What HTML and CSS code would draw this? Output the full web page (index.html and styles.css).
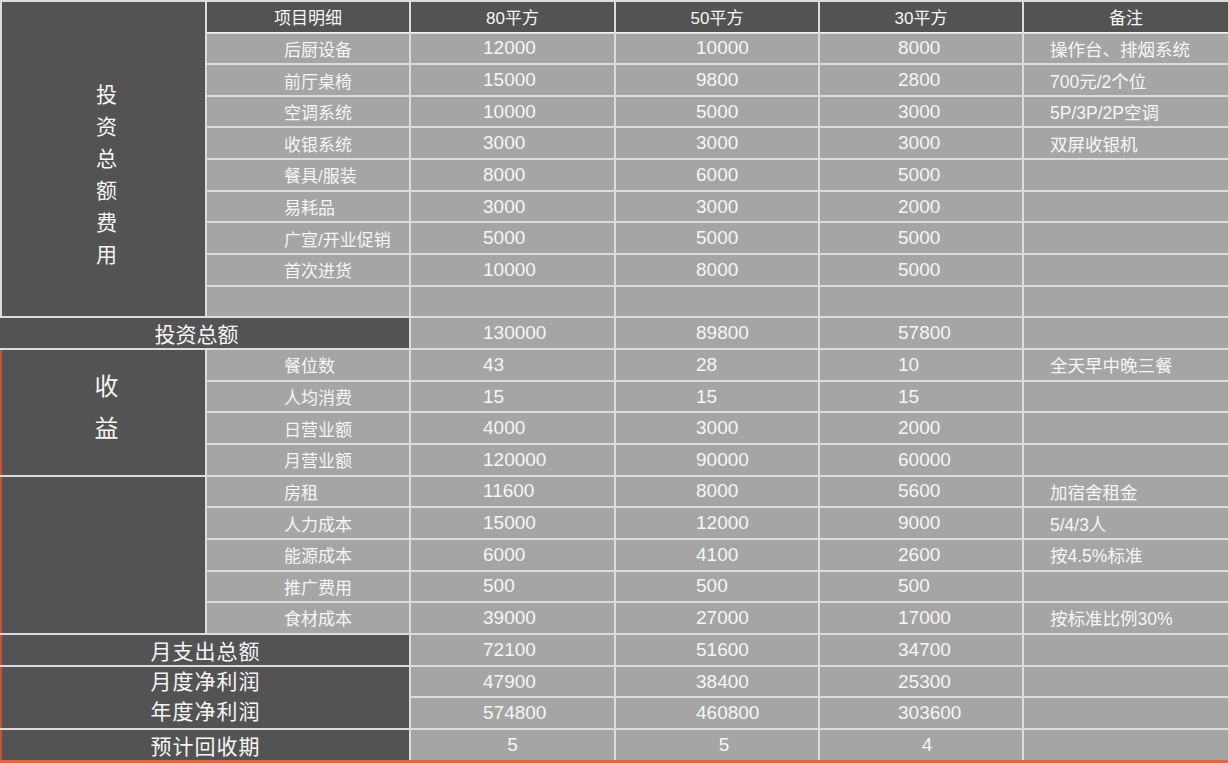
FILE: index.html
```html
<!DOCTYPE html>
<html lang="zh">
<head>
<meta charset="utf-8">
<title>投资收益表</title>
<link rel="stylesheet" href="styles.css">
</head>
<body>
<div class="sheet">
  <div class="d big tz">投<br>资<br>总<br>额<br>费<br>用</div>
  <div class="d h">项目明细</div>
  <div class="d h">80平方</div>
  <div class="d h">50平方</div>
  <div class="d h">30平方</div>
  <div class="d h">备注</div>

  <div class="l k">后厨设备</div><div class="l n a">12000</div><div class="l n b">10000</div><div class="l n c">8000</div><div class="l m">操作台、排烟系统</div>
  <div class="l k">前厅桌椅</div><div class="l n a">15000</div><div class="l n b">9800</div><div class="l n c">2800</div><div class="l m">700元/2个位</div>
  <div class="l k">空调系统</div><div class="l n a">10000</div><div class="l n b">5000</div><div class="l n c">3000</div><div class="l m">5P/3P/2P空调</div>
  <div class="l k">收银系统</div><div class="l n a">3000</div><div class="l n b">3000</div><div class="l n c">3000</div><div class="l m">双屏收银机</div>
  <div class="l k">餐具/服装</div><div class="l n a">8000</div><div class="l n b">6000</div><div class="l n c">5000</div><div class="l m"></div>
  <div class="l k">易耗品</div><div class="l n a">3000</div><div class="l n b">3000</div><div class="l n c">2000</div><div class="l m"></div>
  <div class="l k">广宣/开业促销</div><div class="l n a">5000</div><div class="l n b">5000</div><div class="l n c">5000</div><div class="l m"></div>
  <div class="l k">首次进货</div><div class="l n a">10000</div><div class="l n b">8000</div><div class="l n c">5000</div><div class="l m"></div>
  <div class="l k"></div><div class="l n a"></div><div class="l n b"></div><div class="l n c"></div><div class="l m"></div>

  <div class="d big sum tot">投资总额</div><div class="l n a">130000</div><div class="l n b">89800</div><div class="l n c">57800</div><div class="l m"></div>

  <div class="d big edge sy">收<br>益</div>
  <div class="l k">餐位数</div><div class="l n a">43</div><div class="l n b">28</div><div class="l n c">10</div><div class="l m">全天早中晚三餐</div>
  <div class="l k">人均消费</div><div class="l n a">15</div><div class="l n b">15</div><div class="l n c">15</div><div class="l m"></div>
  <div class="l k">日营业额</div><div class="l n a">4000</div><div class="l n b">3000</div><div class="l n c">2000</div><div class="l m"></div>
  <div class="l k">月营业额</div><div class="l n a">120000</div><div class="l n b">90000</div><div class="l n c">60000</div><div class="l m"></div>

  <div class="d edge zc"></div>
  <div class="l k">房租</div><div class="l n a">11600</div><div class="l n b">8000</div><div class="l n c">5600</div><div class="l m">加宿舍租金</div>
  <div class="l k">人力成本</div><div class="l n a">15000</div><div class="l n b">12000</div><div class="l n c">9000</div><div class="l m">5/4/3人</div>
  <div class="l k">能源成本</div><div class="l n a">6000</div><div class="l n b">4100</div><div class="l n c">2600</div><div class="l m">按4.5%标准</div>
  <div class="l k">推广费用</div><div class="l n a">500</div><div class="l n b">500</div><div class="l n c">500</div><div class="l m"></div>
  <div class="l k">食材成本</div><div class="l n a">39000</div><div class="l n b">27000</div><div class="l n c">17000</div><div class="l m">按标准比例30%</div>

  <div class="d big edge sum">月支出总额</div><div class="l n a">72100</div><div class="l n b">51600</div><div class="l n c">34700</div><div class="l m"></div>

  <div class="d big edge sum two">月度净利润<br>年度净利润</div>
  <div class="l n a">47900</div><div class="l n b">38400</div><div class="l n c">25300</div><div class="l m"></div>
  <div class="l n a">574800</div><div class="l n b">460800</div><div class="l n c">303600</div><div class="l m"></div>

  <div class="d big edge sum">预计回收期</div><div class="l n ctr">5</div><div class="l n ctr r4">5</div><div class="l n ctr r5">4</div><div class="l m"></div>
</div>
</body>
</html>
```

FILE: styles.css
```css
html, body {
  margin: 0;
  padding: 0;
}
body {
  width: 1228px;
  height: 763px;
  background: #e2633c;
  overflow: hidden;
  font-family: "Liberation Sans", "Noto Sans CJK SC", sans-serif;
  color: #f6f6f6;
}
.sheet {
  box-sizing: border-box;
  height: 760px;
  padding-top: 2px;
  background: #dcdcdc;
  display: grid;
  grid-template-columns: 205px 202px 203px 202px 202px 204px;
  grid-template-rows: repeat(24, 1fr);
  gap: 2px;
}
.sheet > div {
  display: flex;
  align-items: center;
  min-width: 0;
  white-space: nowrap;
}
.d {
  background: #535353;
}
.l {
  background: #a5a5a5;
}
.h {
  justify-content: center;
  font-size: 17px;
  box-shadow: 0 1px 0 #f2f2f2;
}
.big {
  font-size: 21px;
  justify-content: center;
  text-align: center;
}
.tz {
  grid-row: span 10;
  line-height: 32px;
  padding: 32px 0 0 6px;
  margin-left: 2px;
}
.sy {
  grid-row: span 4;
  font-size: 24px;
  line-height: 42px;
  padding: 0 0 8px 6px;
}
.zc {
  grid-row: span 5;
}
.sum {
  grid-column: span 2;
  letter-spacing: 1px;
}
.tot {
  letter-spacing: 0;
  padding-right: 16px;
}
.two {
  grid-row: span 2;
  line-height: 30px;
}
.edge {
  border-left: 2px solid #b9583e;
}
.k {
  font-size: 17px;
  padding-left: 77px;
}
.n {
  font-size: 19px;
}
.a {
  padding-left: 72px;
}
.b {
  padding-left: 80px;
}
.c {
  padding-left: 78px;
}
.m {
  font-size: 17.5px;
  padding-left: 26px;
}
.ctr {
  justify-content: center;
}
.r4 {
  padding-left: 14px;
}
.r5 {
  padding-left: 12px;
}
```
